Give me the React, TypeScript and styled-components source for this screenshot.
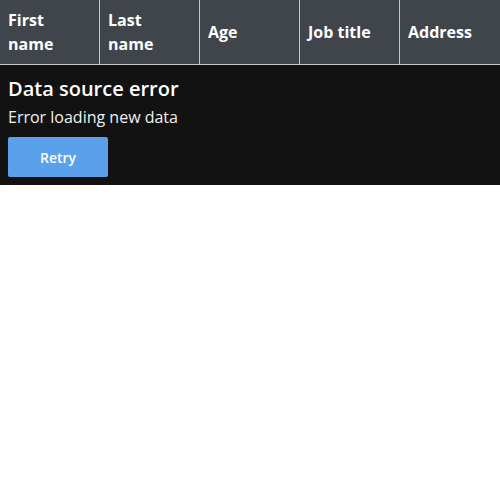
import React from "react";
import styled, { createGlobalStyle } from "styled-components";

const Global = createGlobalStyle`
  html, body { margin: 0; padding: 0; background: #fff; }
  body { font-family: "Open Sans", sans-serif; }
`;

const Grid = styled.div`
  width: 500px;
  display: flex;
  flex-direction: column;
`;

const Header = styled.div`
  display: grid;
  grid-template-columns: repeat(5, 100px);
  height: 64px;
  background: #40454c;
  border-bottom: 1px solid #c8c8c8;
`;

const HeaderCell = styled.div<{ $last?: boolean }>`
  box-sizing: border-box;
  display: flex;
  align-items: center;
  padding: 0 8px;
  border-right: ${(p) => (p.$last ? "none" : "1px solid #c8c8c8")};
  color: #fff;
  font-weight: 700;
  font-size: 16px;
  line-height: 24px;
`;

const ErrorPanel = styled.div`
  background: #121212;
  padding: 12px 8px 8px;
  display: flex;
  flex-direction: column;
  align-items: flex-start;
  color: #fff;
`;

const Title = styled.div`
  font-size: 20px;
  font-weight: 600;
  line-height: 24px;
`;

const Message = styled.div`
  font-size: 16px;
  line-height: 24px;
  margin-top: 4px;
  color: #f0f0f0;
`;

const RetryButton = styled.button`
  margin-top: 8px;
  width: 100px;
  height: 40px;
  border: none;
  border-radius: 2px;
  background: #5ba0eb;
  color: #fff;
  font-family: "Open Sans", sans-serif;
  font-size: 14px;
  font-weight: 600;
  cursor: pointer;
`;

const columns = ["First name", "Last name", "Age", "Job title", "Address"];

export default function App() {
  return (
    <>
      <Global />
      <Grid>
        <Header>
          {columns.map((c, i) => (
            <HeaderCell key={c} $last={i === columns.length - 1}>
              {c}
            </HeaderCell>
          ))}
        </Header>
        <ErrorPanel>
          <Title>Data source error</Title>
          <Message>Error loading new data</Message>
          <RetryButton>Retry</RetryButton>
        </ErrorPanel>
      </Grid>
    </>
  );
}
